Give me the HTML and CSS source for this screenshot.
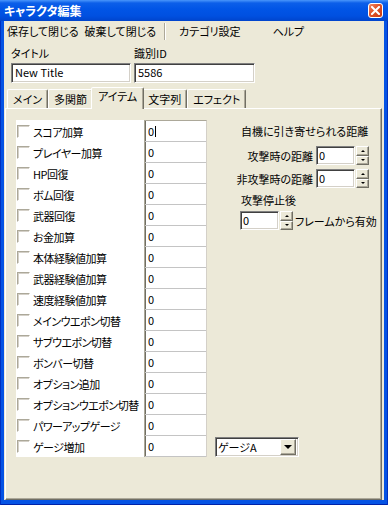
FILE: index.html
```html
<!DOCTYPE html>
<html lang="ja">
<head>
    <meta charset="UTF-8">
    <title>キャラクタ編集</title>
    <link rel="stylesheet" href="styles.css">
</head>
<body>
    <div class="window">
        <div class="titlebar">
            <span class="title">キャラクタ編集</span>
            <div class="close-btn">
                <svg width="9" height="9" viewBox="0 0 9 9">
                    <path d="M1 1 L8 8 M8 1 L1 8" stroke="#fff" stroke-width="2" stroke-linecap="square"/>
                </svg>
            </div>
        </div>

        <div class="frame">
            <div class="menubar">
                <span class="menu-item">保存して閉じる</span>
                <span class="menu-item">破棄して閉じる</span>
                <span class="menu-sep"></span>
                <span class="menu-item menu-category">カテゴリ設定</span>
                <span class="menu-item menu-help">ヘルプ</span>
            </div>

            <div class="fields">
                <div class="field">
                    <label>タイトル</label>
                    <div class="textbox field-input">New Title</div>
                </div>
                <div class="field field-id">
                    <label>識別ID</label>
                    <div class="textbox field-input">5586</div>
                </div>
            </div>

            <div class="tabs">
                <span class="tab">メイン</span>
                <span class="tab">多関節</span>
                <span class="tab active">アイテム</span>
                <span class="tab">文字列</span>
                <span class="tab">エフェクト</span>
            </div>

            <div class="panel">
                <div class="content">
                    <div class="names">
                        <div class="name"><span class="checkbox"></span>スコア加算</div>
                        <div class="name"><span class="checkbox"></span>プレイヤー加算</div>
                        <div class="name"><span class="checkbox"></span>HP回復</div>
                        <div class="name"><span class="checkbox"></span>ボム回復</div>
                        <div class="name"><span class="checkbox"></span>武器回復</div>
                        <div class="name"><span class="checkbox"></span>お金加算</div>
                        <div class="name"><span class="checkbox"></span>本体経験値加算</div>
                        <div class="name"><span class="checkbox"></span>武器経験値加算</div>
                        <div class="name"><span class="checkbox"></span>速度経験値加算</div>
                        <div class="name"><span class="checkbox"></span>メインウエポン切替</div>
                        <div class="name"><span class="checkbox"></span>サブウエポン切替</div>
                        <div class="name"><span class="checkbox"></span>ボンバー切替</div>
                        <div class="name"><span class="checkbox"></span>オプション追加</div>
                        <div class="name"><span class="checkbox"></span>オプションウエポン切替</div>
                        <div class="name"><span class="checkbox"></span>パワーアップゲージ</div>
                        <div class="name"><span class="checkbox"></span>ゲージ増加</div>
                    </div>
                    <div class="values">
                        <div class="value">0<span class="caret"></span></div>
                        <div class="value">0</div>
                        <div class="value">0</div>
                        <div class="value">0</div>
                        <div class="value">0</div>
                        <div class="value">0</div>
                        <div class="value">0</div>
                        <div class="value">0</div>
                        <div class="value">0</div>
                        <div class="value">0</div>
                        <div class="value">0</div>
                        <div class="value">0</div>
                        <div class="value">0</div>
                        <div class="value">0</div>
                        <div class="value">0</div>
                        <div class="value">0</div>
                    </div>

                    <div class="side">
                        <div class="side-heading">自機に引き寄せられる距離</div>
                        <div class="dist-row">
                            <span class="dist-label">攻撃時の距離</span>
                            <div class="textbox spin-input">0</div>
                            <div class="spin">
                                <span class="spin-btn"><i class="arrow-up"></i></span>
                                <span class="spin-btn"><i class="arrow-down"></i></span>
                            </div>
                        </div>
                        <div class="dist-row second">
                            <span class="dist-label">非攻撃時の距離</span>
                            <div class="textbox spin-input">0</div>
                            <div class="spin">
                                <span class="spin-btn"><i class="arrow-up"></i></span>
                                <span class="spin-btn"><i class="arrow-down"></i></span>
                            </div>
                        </div>
                        <div class="stop-label">攻撃停止後</div>
                        <div class="frame-row">
                            <div class="textbox spin-input">0</div>
                            <div class="spin">
                                <span class="spin-btn"><i class="arrow-up"></i></span>
                                <span class="spin-btn"><i class="arrow-down"></i></span>
                            </div>
                            <span class="frame-text">フレームから有効</span>
                        </div>

                        <div class="textbox combo">
                            <span class="combo-text">ゲージA</span>
                            <span class="combo-btn"><i class="arrow-combo"></i></span>
                        </div>
                    </div>
                </div>
            </div>
        </div>
    </div>
</body>
</html>
```

FILE: styles.css
```css
* {
    box-sizing: border-box;
}
body {
    margin: 0;
    font-family: "Noto Sans CJK JP", "Noto Sans", sans-serif;
    font-size: 11px;
    font-feature-settings: "palt";
    color: #000;
}
.window {
    width: 388px;
    height: 505px;
    display: flex;
    flex-direction: column;
    background: #0553e4;
    box-shadow: inset 1px 0 #0030c0, inset -1px 0 #0030c0, inset 0 -1px #0022a8;
}

/* title bar */
.titlebar {
    height: 21px;
    display: flex;
    align-items: center;
    justify-content: space-between;
    padding: 0 5px 0 4px;
    background: linear-gradient(to bottom, #4a96fb 0, #0c5fe9 3px, #0155e6 9px, #0050e0 16px, #0044cc 21px);
}
.title {
    color: #fff;
    font-weight: bold;
    font-size: 12px;
}
.close-btn {
    width: 15px;
    height: 15px;
    border: 1px solid #fff;
    border-radius: 3px;
    background: linear-gradient(135deg, #f08a6a 0, #e2572d 40%, #c73a12 100%);
    display: flex;
    align-items: center;
    justify-content: center;
}

/* dialog body */
.frame {
    flex: 1;
    margin: 0 4px 5px;
    background: #ece9d8;
    display: flex;
    flex-direction: column;
}
.menubar {
    height: 21px;
    display: flex;
    align-items: center;
}
.menu-item {
    padding: 0 3px;
    line-height: 17px;
}
.menu-sep {
    width: 2px;
    height: 17px;
    margin-left: 5px;
    border-left: 1px solid #aca899;
    border-right: 1px solid #fff;
}
.menu-category {
    margin-left: 10px;
}
.menu-help {
    margin-left: 26px;
}

.fields {
    display: flex;
    gap: 3px;
    padding: 4px 0 0 7px;
}
.field {
    width: 120px;
    display: flex;
    flex-direction: column;
}
.field-id {
    width: 121px;
}
.field label {
    height: 14px;
    line-height: 14px;
}
.field-input {
    margin-top: 3px;
    height: 20px;
    line-height: 17px;
}

.textbox {
    background: #fff;
    border: 1px solid;
    border-color: #808080 #fff #fff #808080;
    box-shadow: inset 1px 1px #404040, inset -1px -1px #d4d0c8;
    padding: 0 3px;
    white-space: nowrap;
}

/* tabs */
.tabs {
    height: 21px;
    margin: 4px 0 0 1px;
    padding-left: 2px;
    display: flex;
    align-items: flex-end;
}
.tab {
    height: 19px;
    padding: 0 5px;
    line-height: 18px;
    border: 1px solid;
    border-bottom: none;
    border-color: #fff #716f64 transparent #fff;
    border-radius: 2px 2px 0 0;
    box-shadow: inset -1px 0 #aca899;
    white-space: nowrap;
}
.tab.active {
    height: 22px;
    margin: 0 -2px -1px;
    padding: 0 6px 2px;
    line-height: 17px;
    background: #ece9d8;
    position: relative;
    z-index: 1;
}

.panel {
    flex: 1;
    margin: 0 2px 0 1px;
    border: 1px solid;
    border-color: #fff #716f64 #716f64 #fff;
    box-shadow: inset -1px -1px #aca899;
    padding: 11px 0 0 10px;
}
.content {
    display: flex;
    align-items: stretch;
}

/* item grid */
.names {
    width: 128px;
    background: #fff;
    padding-top: 1px;
}
.name {
    height: 21px;
    display: flex;
    align-items: center;
    padding-left: 1px;
    letter-spacing: -0.5px;
    white-space: nowrap;
}
.checkbox {
    flex: none;
    width: 13px;
    height: 13px;
    margin-right: 3px;
    background: #fff;
    border: 1px solid;
    border-color: #aca899 #fff #fff #aca899;
    box-shadow: inset 1px 1px #d4d0c8;
}
.values {
    width: 63px;
    background: #fff;
    border-left: 1px solid #aca899;
    border-top: 1px solid #aca899;
    border-right: 1px solid #d4d0c8;
    box-shadow: inset 1px 0 #716f64;
}
.value {
    height: 21px;
    line-height: 20px;
    padding-left: 3px;
    border-bottom: 1px solid #c4c4c4;
}
.caret {
    display: inline-block;
    width: 1px;
    height: 11px;
    margin-left: 1px;
    background: #000;
    vertical-align: -1px;
}

/* right side settings */
.side {
    width: 166px;
    margin-left: 8px;
    display: flex;
    flex-direction: column;
}
.side-heading {
    margin: 4px 0 0 26px;
    line-height: 14px;
    white-space: nowrap;
}
.dist-row {
    display: flex;
    align-items: center;
    margin-top: 8px;
}
.dist-row.second {
    margin-top: 4px;
}
.dist-label {
    width: 98px;
    margin-right: 3px;
    text-align: right;
    white-space: nowrap;
}
.spin-input {
    width: 39px;
    height: 19px;
    line-height: 17px;
    padding: 0 2px;
}
.spin {
    width: 13px;
    height: 19px;
    margin-left: 1px;
    display: flex;
    flex-direction: column;
}
.spin-btn {
    flex: 1;
    background: #ece9d8;
    border: 1px solid;
    border-color: #fff #716f64 #716f64 #fff;
    box-shadow: inset -1px -1px #aca899;
    display: flex;
    align-items: center;
    justify-content: center;
}
.arrow-up {
    border-left: 2px solid transparent;
    border-right: 2px solid transparent;
    border-bottom: 2px solid #000;
}
.arrow-down {
    border-left: 2px solid transparent;
    border-right: 2px solid transparent;
    border-top: 2px solid #000;
}
.stop-label {
    margin: 5px 0 0 26px;
    line-height: 14px;
}
.frame-row {
    display: flex;
    align-items: center;
    margin: 4px 0 0 25px;
}
.frame-text {
    margin-left: 2px;
    white-space: nowrap;
}

.combo {
    margin-top: auto;
    width: 84px;
    height: 20px;
    display: flex;
    align-items: center;
    padding: 2px;
}
.combo-text {
    flex: 1;
    line-height: 16px;
}
.combo-btn {
    width: 16px;
    height: 16px;
    background: #ece9d8;
    border: 1px solid;
    border-color: #fff #716f64 #716f64 #fff;
    box-shadow: inset -1px -1px #aca899;
    display: flex;
    align-items: center;
    justify-content: center;
}
.arrow-combo {
    border-left: 4px solid transparent;
    border-right: 4px solid transparent;
    border-top: 4px solid #000;
}
```
